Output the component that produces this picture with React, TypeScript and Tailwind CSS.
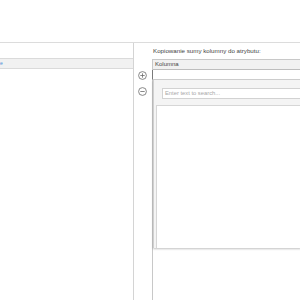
import React from "react";

const PlusCircle = () => (
  <svg width="9" height="9" viewBox="0 0 9 9" fill="none" stroke="#6b6b6b" strokeWidth="0.8">
    <circle cx="4.5" cy="4.5" r="3.9" />
    <path d="M4.5 2.3v4.4M2.3 4.5h4.4" />
  </svg>
);

const MinusCircle = () => (
  <svg width="9" height="9" viewBox="0 0 9 9" fill="none" stroke="#6b6b6b" strokeWidth="0.8">
    <circle cx="4.5" cy="4.5" r="3.9" />
    <path d="M2.3 4.5h4.4" />
  </svg>
);

const App = () => {
  return (
    <div className="relative w-[300px] h-[300px] overflow-hidden bg-white font-['Liberation_Sans',sans-serif] text-[6px] text-[#333]">
      {/* top area */}
      <div className="h-[43px] border-b border-[#dcdcdc]" />

      <div className="flex h-[257px]">
        {/* left panel */}
        <div className="w-[134px] flex flex-col pt-[15px] border-r border-[#d4d4d4]">
          <div className="h-[11px] bg-[#f1f1f1] border-t border-b border-[#dadada] flex items-center">
            <span className="text-[#4a8fd6] leading-none text-[5px]">e</span>
          </div>
        </div>

        {/* add / remove */}
        <div className="w-[18px] flex flex-col items-center pt-[28px] gap-[7px] pr-[1px]">
          <PlusCircle />
          <MinusCircle />
        </div>

        {/* right panel */}
        <div className="flex-1 flex flex-col">
          <div className="h-[16px] flex items-center pl-[1px] text-[6.2px] text-[#444]">
            Kopiowanie sumy kolumny do atrybutu:
          </div>
          <div className="flex-1 border-l border-t border-[#c8c8c8] flex flex-col">
            <div className="h-[10px] bg-[#f1f1f1] border-b border-[#bdbdbd] flex items-center pl-[2px] text-[#444]">
              Kolumna
            </div>
            <div className="h-[10px] bg-white border-b border-[#d0d0d0] border-l border-l-[#7a7a7a] -ml-[1px]" />
          </div>
        </div>
      </div>

      {/* dropdown popup */}
      <div className="absolute left-[153px] top-[80px] w-[148px] h-[168px] bg-[#f4f4f4] border-l border-[#d0d0d0] shadow-[0_1px_2px_rgba(0,0,0,0.25)] flex flex-col">
        <div className="pl-[8px] pt-[8px] pb-[6px]">
          <div className="h-[11px] bg-white border border-[#d2d2d2] flex items-center pl-[2px] text-[#a8a8a8] text-[5.8px]">
            Enter text to search...
          </div>
        </div>
        <div className="flex-1 ml-[2px] bg-white border-l border-t border-[#d6d6d6]" />
      </div>
    </div>
  );
};

export default App;
